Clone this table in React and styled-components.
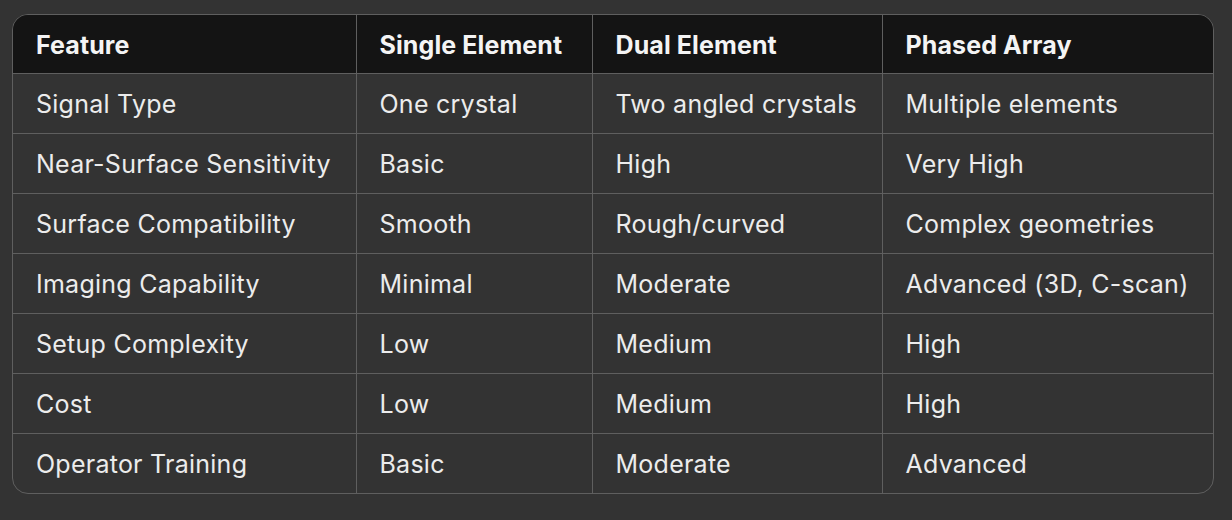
import React from "react";
import styled, { createGlobalStyle } from "styled-components";

const GlobalStyle = createGlobalStyle`
  html, body {
    margin: 0;
    background: #333333;
  }
  body {
    font-family: Inter, "Noto Sans", "Liberation Sans", sans-serif;
    -webkit-font-smoothing: antialiased;
  }
`;

const Page = styled.div`
  padding: 14px 18px 26px 12px;
  width: 1232px;
  box-sizing: border-box;
`;

const Frame = styled.div`
  border: 1px solid #5f5f5f;
  border-radius: 16px;
  overflow: hidden;
`;

const Table = styled.table`
  width: 100%;
  border-collapse: collapse;
  table-layout: fixed;
`;

const HeadCell = styled.th`
  background: #141414;
  color: #f4f4f4;
  font-weight: 700;
  font-size: 25px;
  letter-spacing: 0.1px;
  text-align: left;
  height: 58px;
  padding: 2px 0 0 23px;
  box-sizing: border-box;
  border-left: ${(p) => (p.$first ? "none" : "1px solid #5f5f5f")};
  border-bottom: 1px solid #5f5f5f;
  white-space: nowrap;
`;

const Cell = styled.td`
  color: #ececec;
  font-size: 25px;
  font-weight: 400;
  letter-spacing: 0.25px;
  height: 60px;
  padding: 2px 0 0 23px;
  box-sizing: border-box;
  border-left: ${(p) => (p.$first ? "none" : "1px solid #5f5f5f")};
  border-top: ${(p) => (p.$top ? "none" : "1px solid #5f5f5f")};
  white-space: nowrap;
`;

const columns = [
  { title: "Feature", width: 343 },
  { title: "Single Element", width: 236 },
  { title: "Dual Element", width: 290 },
  { title: "Phased Array" },
];

const rows = [
  ["Signal Type", "One crystal", "Two angled crystals", "Multiple elements"],
  ["Near-Surface Sensitivity", "Basic", "High", "Very High"],
  ["Surface Compatibility", "Smooth", "Rough/curved", "Complex geometries"],
  ["Imaging Capability", "Minimal", "Moderate", "Advanced (3D, C-scan)"],
  ["Setup Complexity", "Low", "Medium", "High"],
  ["Cost", "Low", "Medium", "High"],
  ["Operator Training", "Basic", "Moderate", "Advanced"],
];

export default function App() {
  return (
    <>
      <GlobalStyle />
      <Page>
        <Frame>
          <Table>
            <colgroup>
              {columns.map((c) => (
                <col key={c.title} style={c.width ? { width: c.width } : undefined} />
              ))}
            </colgroup>
            <thead>
              <tr>
                {columns.map((c, i) => (
                  <HeadCell key={c.title} $first={i === 0}>
                    {c.title}
                  </HeadCell>
                ))}
              </tr>
            </thead>
            <tbody>
              {rows.map((r, ri) => (
                <tr key={ri}>
                  {r.map((v, i) => (
                    <Cell key={i} $first={i === 0} $top={ri === 0}>
                      {v}
                    </Cell>
                  ))}
                </tr>
              ))}
            </tbody>
          </Table>
        </Frame>
      </Page>
    </>
  );
}
